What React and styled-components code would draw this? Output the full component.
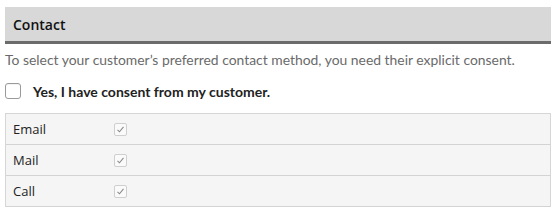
import React from 'react';
import styled, { createGlobalStyle } from 'styled-components';

const GlobalStyle = createGlobalStyle`
  body {
    margin: 0;
    background: #fff;
    font-family: Lato, "Liberation Sans", sans-serif;
  }
`

const Panel = styled.section`
  padding: 7px 7px 0 5px;
`

const Header = styled.h2`
  margin: 0;
  height: 34px;
  display: flex;
  align-items: center;
  padding-left: 8px;
  background: #d8d8d8;
  border-bottom: 3px solid #6b6b6b;
  font-family: "Open Sans", sans-serif;
  font-size: 14px;
  font-weight: 600;
  color: #111;
`

const Intro = styled.p`
  margin: 0;
  padding-top: 6px;
  line-height: 20px;
  font-size: 13.9px;
  color: #6a6a6a;
`

const Consent = styled.label`
  display: flex;
  align-items: center;
  gap: 12px;
  margin-top: 11px;
  height: 20px;
  font-size: 14px;
  font-weight: 700;
  color: #222;
`

const BigBox = styled.span`
  width: 14px;
  height: 14px;
  border: 1px solid #9a9a9a;
  border-radius: 3px;
  background: #fff;
  box-shadow: inset 0 1px 1px rgba(0,0,0,0.05);
`

const Table = styled.div`
  margin-top: 12px;
  border: 1px solid #d6d6d6;
  border-bottom: none;
  background: #f5f5f5;
`

const Row = styled.div`
  display: grid;
  grid-template-columns: 101px 1fr;
  align-items: center;
  height: 30px;
  padding-left: 7px;
  border-bottom: 1px solid #d3d3d3;
  font-family: "Open Sans", sans-serif;
  font-size: 13px;
  color: #222;
`

const SmallBox = styled.span`
  width: 11px;
  height: 11px;
  border: 1px solid #cfcfcf;
  border-radius: 2px;
  background: #fafafa;
  display: flex;
  align-items: center;
  justify-content: center;
`

const Check = () => (
  <svg width="9" height="9" viewBox="0 0 9 9">
    <path d="M1.5 4.8 L3.5 6.8 L7.5 1.8" fill="none" stroke="#8a8a8a" strokeWidth="1.1" />
  </svg>
)

const methods = ['Email', 'Mail', 'Call']

export default function App() {
  return (
    <>
      <GlobalStyle />
      <Panel>
        <Header>Contact</Header>
        <Intro>To select your customer’s preferred contact method, you need their explicit consent.</Intro>
        <Consent>
          <BigBox />
          Yes, I have consent from my customer.
        </Consent>
        <Table>
          {methods.map(m => (
            <Row key={m}>
              <span>{m}</span>
              <SmallBox><Check /></SmallBox>
            </Row>
          ))}
        </Table>
      </Panel>
    </>
  )
}
